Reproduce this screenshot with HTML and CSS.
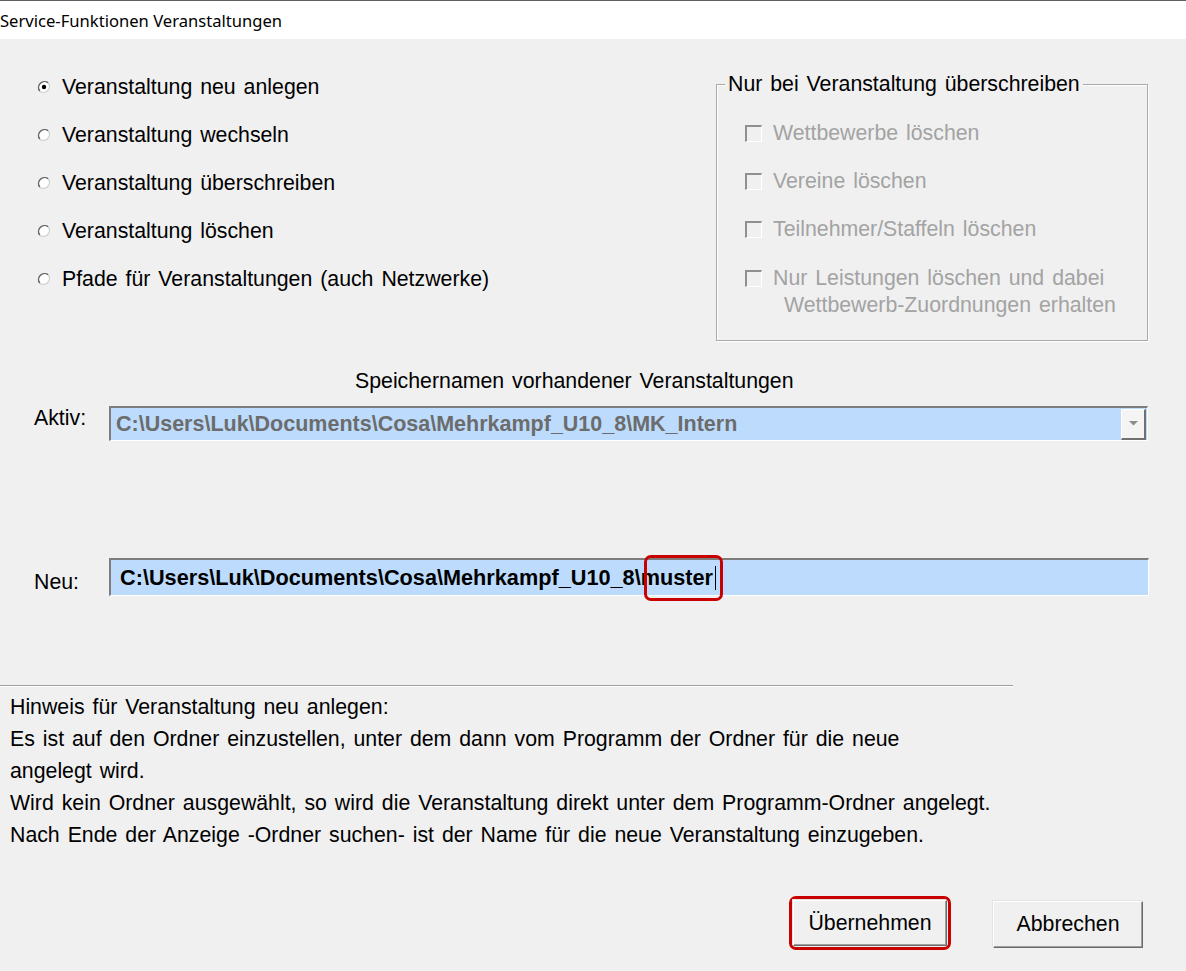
FILE: index.html
```html
<!DOCTYPE html>
<html lang="de">
<head>
<meta charset="utf-8">
<title>Service-Funktionen Veranstaltungen</title>
<link rel="stylesheet" href="styles.css">
</head>
<body>
<div class="window">
  <div class="titlebar">Service-Funktionen Veranstaltungen</div>
  <div class="main">
    <div class="top">
      <div class="radios">
        <div class="radio-row">
          <svg class="radio" viewBox="0 0 14 14" width="14" height="14"><circle cx="7" cy="7" r="6" fill="#fff"/><path d="M2.8 11.2A6 6 0 0 1 11.2 2.8" stroke="#5c5c5c" stroke-width="1.4" fill="none"/><path d="M11.2 2.8A6 6 0 0 1 2.8 11.2" stroke="#cfcfcf" stroke-width="1.4" fill="none"/><circle cx="7" cy="7" r="2.2" fill="#000"/></svg>
          <span>Veranstaltung neu anlegen</span>
        </div>
        <div class="radio-row">
          <svg class="radio" viewBox="0 0 14 14" width="14" height="14"><circle cx="7" cy="7" r="6" fill="#fff"/><path d="M2.8 11.2A6 6 0 0 1 11.2 2.8" stroke="#5c5c5c" stroke-width="1.4" fill="none"/><path d="M11.2 2.8A6 6 0 0 1 2.8 11.2" stroke="#cfcfcf" stroke-width="1.4" fill="none"/></svg>
          <span>Veranstaltung wechseln</span>
        </div>
        <div class="radio-row">
          <svg class="radio" viewBox="0 0 14 14" width="14" height="14"><circle cx="7" cy="7" r="6" fill="#fff"/><path d="M2.8 11.2A6 6 0 0 1 11.2 2.8" stroke="#5c5c5c" stroke-width="1.4" fill="none"/><path d="M11.2 2.8A6 6 0 0 1 2.8 11.2" stroke="#cfcfcf" stroke-width="1.4" fill="none"/></svg>
          <span>Veranstaltung überschreiben</span>
        </div>
        <div class="radio-row">
          <svg class="radio" viewBox="0 0 14 14" width="14" height="14"><circle cx="7" cy="7" r="6" fill="#fff"/><path d="M2.8 11.2A6 6 0 0 1 11.2 2.8" stroke="#5c5c5c" stroke-width="1.4" fill="none"/><path d="M11.2 2.8A6 6 0 0 1 2.8 11.2" stroke="#cfcfcf" stroke-width="1.4" fill="none"/></svg>
          <span>Veranstaltung löschen</span>
        </div>
        <div class="radio-row">
          <svg class="radio" viewBox="0 0 14 14" width="14" height="14"><circle cx="7" cy="7" r="6" fill="#fff"/><path d="M2.8 11.2A6 6 0 0 1 11.2 2.8" stroke="#5c5c5c" stroke-width="1.4" fill="none"/><path d="M11.2 2.8A6 6 0 0 1 2.8 11.2" stroke="#cfcfcf" stroke-width="1.4" fill="none"/></svg>
          <span>Pfade für Veranstaltungen (auch Netzwerke)</span>
        </div>
      </div>
      <div class="group">
        <div class="legend">Nur bei Veranstaltung überschreiben</div>
        <div class="checks">
          <div class="check-row"><span class="cb"></span><span>Wettbewerbe löschen</span></div>
          <div class="check-row"><span class="cb"></span><span>Vereine löschen</span></div>
          <div class="check-row"><span class="cb"></span><span>Teilnehmer/Staffeln löschen</span></div>
          <div class="check-multi">
            <span class="cb"></span>
            <div>
              <div>Nur Leistungen löschen und dabei</div>
              <div class="indent">Wettbewerb-Zuordnungen erhalten</div>
            </div>
          </div>
        </div>
      </div>
    </div>

    <div class="caption">Speichernamen vorhandener Veranstaltungen</div>

    <div class="field-row aktiv">
      <span class="label">Aktiv:</span>
      <div class="combo">
        <span class="combo-text">C:\Users\Luk\Documents\Cosa\Mehrkampf_U10_8\MK_Intern</span>
        <span class="combo-btn"><svg viewBox="0 0 9 5" width="9" height="5"><path d="M0 0H9L4.5 4.5Z" fill="#8c8c8c"/></svg></span>
      </div>
    </div>

    <div class="field-row neu">
      <span class="label">Neu:</span>
      <div class="input">
        <span class="input-text">C:\Users\Luk\Documents\Cosa\Mehrkampf_U10_8\<span class="mark">muster<span class="caret"></span></span></span>
      </div>
    </div>
  </div>

  <div class="separator"></div>

  <div class="hint">
    <div class="line">Hinweis für Veranstaltung neu anlegen:</div>
    <div class="line">Es ist auf den Ordner einzustellen, unter dem dann vom Programm der Ordner für die neue</div>
    <div class="line">angelegt wird.</div>
    <div class="line">Wird kein Ordner ausgewählt, so wird die Veranstaltung direkt unter dem Programm-Ordner angelegt.</div>
    <div class="line">Nach Ende der Anzeige -Ordner suchen- ist der Name für die neue Veranstaltung einzugeben.</div>
  </div>

  <div class="buttons">
    <div class="focus-ring"><div class="btn ok">Übernehmen</div></div>
    <div class="btn cancel">Abbrechen</div>
  </div>
</div>
</body>
</html>
```

FILE: styles.css
```css
html, body {
  margin: 0;
  padding: 0;
}

body {
  background: #f0f0f0;
  font-family: "Liberation Sans", Arial, sans-serif;
  font-size: 21.3px;
  word-spacing: 2px;
  color: #000;
  width: 1186px;
  height: 971px;
  overflow: hidden;
}

.titlebar {
  height: 38px;
  background: #fff;
  border-top: 1px solid #5f5f5f;
  font-family: "Noto Sans", "Liberation Sans", sans-serif;
  font-size: 16.6px;
  word-spacing: 0;
  line-height: 39px;
  color: #000;
  white-space: nowrap;
}

.main {
  padding-top: 24px;
}

.top {
  display: flex;
  align-items: flex-start;
}

.radios {
  flex: 1;
  padding-left: 37px;
}

.radio-row {
  display: flex;
  align-items: center;
  gap: 11px;
  height: 48px;
  white-space: nowrap;
}

.radio {
  flex: none;
  display: block;
}

.group {
  flex: none;
  box-sizing: border-box;
  width: 432px;
  margin-top: 21px;
  margin-right: 38px;
  border: 1px solid #a9a9a9;
  box-shadow: inset 1px 1px 0 #fff, 1px 1px 0 #fff;
  padding: 0 0 21px 28px;
  color: #a3a3a3;
}

.legend {
  width: fit-content;
  margin-top: -13px;
  margin-left: -20px;
  padding: 0 3px;
  line-height: 24px;
  background: #f0f0f0;
  color: #000;
  white-space: nowrap;
}

.checks {
  margin-top: 13px;
}

.check-row {
  display: flex;
  align-items: center;
  gap: 11px;
  height: 48px;
  white-space: nowrap;
}

.cb {
  flex: none;
  width: 17px;
  height: 17px;
  box-sizing: border-box;
  border-top: 2px solid #8f8f8f;
  border-left: 2px solid #8f8f8f;
  border-right: 1px solid #fff;
  border-bottom: 1px solid #fff;
  background: #f0f0f0;
}

.check-multi {
  display: flex;
  align-items: flex-start;
  gap: 11px;
  margin-top: 12px;
  line-height: 27px;
  white-space: nowrap;
}

.check-multi .cb {
  margin-top: 5px;
}

.indent {
  padding-left: 11px;
}

.caption {
  margin-top: 28px;
  padding-left: 355px;
  line-height: 24px;
}

.field-row {
  display: flex;
  align-items: flex-start;
  padding-left: 34px;
}

.label {
  flex: none;
  width: 75px;
  line-height: 24px;
}

.aktiv {
  margin-top: 13px;
  padding-right: 38px;
}

.combo {
  flex: 1;
  height: 35px;
  box-sizing: border-box;
  border-top: 2px solid #7d7d7d;
  border-left: 2px solid #7d7d7d;
  border-right: 1px solid #fff;
  border-bottom: 1px solid #fff;
  background: #bddcfd;
  display: flex;
  align-items: center;
}

.combo-text {
  flex: 1;
  padding-left: 5px;
  font-weight: bold;
  font-size: 21.5px;
  word-spacing: 0;
  color: #6c6c6c;
  white-space: nowrap;
  overflow: hidden;
}

.combo-btn {
  flex: none;
  width: 25px;
  height: 31px;
  margin-right: 1px;
  box-sizing: border-box;
  background: #f4f4f4;
  border-top: 1px solid #fff;
  border-left: 1px solid #fff;
  border-right: 2px solid #707070;
  border-bottom: 2px solid #707070;
  display: flex;
  align-items: center;
  justify-content: center;
}

.neu {
  margin-top: 117px;
  padding-right: 37px;
}

.neu .label {
  margin-top: 12px;
}

.input {
  flex: 1;
  height: 38px;
  box-sizing: border-box;
  border-top: 2px solid #7d7d7d;
  border-left: 2px solid #7d7d7d;
  border-right: 1px solid #fff;
  border-bottom: 1px solid #fff;
  background: #bddcfd;
  display: flex;
  align-items: center;
  padding-left: 9px;
}

.input-text {
  font-weight: bold;
  font-size: 21.7px;
  word-spacing: 0;
  white-space: nowrap;
}

.mark {
  position: relative;
}

.mark::after {
  content: "";
  position: absolute;
  left: 3px;
  right: -7px;
  top: -10px;
  bottom: -11px;
  border: 3px solid #c80000;
  border-radius: 7px;
}

.caret {
  display: inline-block;
  width: 1px;
  height: 24px;
  background: #000;
  vertical-align: -5px;
  margin-left: 2px;
}

.separator {
  margin-top: 89px;
  width: 1013px;
  height: 1px;
  background: #a0a0a0;
  border-bottom: 1px solid #fff;
}

.hint {
  margin-top: 4px;
  padding-left: 10px;
  line-height: 32px;
  white-space: nowrap;
}

.buttons {
  margin-top: 45px;
  display: flex;
  justify-content: flex-end;
  align-items: flex-start;
  gap: 42px;
  padding-right: 43px;
}

.focus-ring {
  border: 3px solid #c80000;
  border-radius: 7px;
  padding: 1px;
}

.btn {
  box-sizing: border-box;
  background: #f0f0f0;
  border-top: 1px solid #fff;
  border-left: 1px solid #fff;
  border-right: 1px solid #6b6b6b;
  border-bottom: 1px solid #6b6b6b;
  box-shadow: inset -1px -1px 0 #a0a0a0, -1px -1px 0 #e3e3e3;
  display: flex;
  align-items: center;
  justify-content: center;
  white-space: nowrap;
}

.ok {
  width: 154px;
  height: 46px;
}

.cancel {
  width: 150px;
  height: 47px;
  margin-top: 5px;
}
```
